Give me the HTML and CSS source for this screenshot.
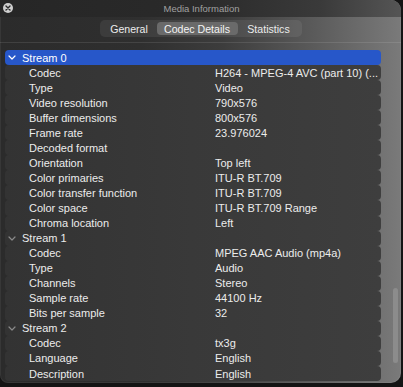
FILE: index.html
```html
<!DOCTYPE html>
<html>
<head>
<meta charset="utf-8">
<link rel="stylesheet" href="styles.css">
</head>
<body>
<div class="window">
  <div class="titlebar">
    <span class="close"><svg width="10" height="10" viewBox="0 0 10 10"><path d="M3 3 L7 7 M7 3 L3 7" stroke="#2a2a2a" stroke-width="1.4" stroke-linecap="round"/></svg></span>
    <span class="title">Media Information</span>
  </div>
  <div class="toolbar">
    <div class="segmented">
      <span class="seg seg-general">General</span>
      <span class="seg seg-codec active">Codec Details</span>
      <span class="seg seg-stats">Statistics</span>
    </div>
  </div>
  <div class="list">
    <div class="row stream selected"><span class="chev"><svg width="8" height="5" viewBox="0 0 8 5"><path d="M1 1 L4 4 L7 1" fill="none" stroke="#ffffff" stroke-width="1.2" stroke-linecap="round" stroke-linejoin="round"/></svg></span><span class="key">Stream 0</span></div>
    <div class="row"><span class="key">Codec</span><span class="val">H264 - MPEG-4 AVC (part 10) (...</span></div>
    <div class="row"><span class="key">Type</span><span class="val">Video</span></div>
    <div class="row"><span class="key">Video resolution</span><span class="val">790x576</span></div>
    <div class="row"><span class="key">Buffer dimensions</span><span class="val">800x576</span></div>
    <div class="row"><span class="key">Frame rate</span><span class="val">23.976024</span></div>
    <div class="row"><span class="key">Decoded format</span><span class="val"></span></div>
    <div class="row"><span class="key">Orientation</span><span class="val">Top left</span></div>
    <div class="row"><span class="key">Color primaries</span><span class="val">ITU-R BT.709</span></div>
    <div class="row"><span class="key">Color transfer function</span><span class="val">ITU-R BT.709</span></div>
    <div class="row"><span class="key">Color space</span><span class="val">ITU-R BT.709 Range</span></div>
    <div class="row"><span class="key">Chroma location</span><span class="val">Left</span></div>
    <div class="row stream"><span class="chev"><svg width="8" height="5" viewBox="0 0 8 5"><path d="M1 1 L4 4 L7 1" fill="none" stroke="#8a8a8a" stroke-width="1.2" stroke-linecap="round" stroke-linejoin="round"/></svg></span><span class="key">Stream 1</span></div>
    <div class="row"><span class="key">Codec</span><span class="val">MPEG AAC Audio (mp4a)</span></div>
    <div class="row"><span class="key">Type</span><span class="val">Audio</span></div>
    <div class="row"><span class="key">Channels</span><span class="val">Stereo</span></div>
    <div class="row"><span class="key">Sample rate</span><span class="val">44100 Hz</span></div>
    <div class="row"><span class="key">Bits per sample</span><span class="val">32</span></div>
    <div class="row stream"><span class="chev"><svg width="8" height="5" viewBox="0 0 8 5"><path d="M1 1 L4 4 L7 1" fill="none" stroke="#8a8a8a" stroke-width="1.2" stroke-linecap="round" stroke-linejoin="round"/></svg></span><span class="key">Stream 2</span></div>
    <div class="row"><span class="key">Codec</span><span class="val">tx3g</span></div>
    <div class="row"><span class="key">Language</span><span class="val">English</span></div>
    <div class="row"><span class="key">Description</span><span class="val">English</span></div>
    <div class="scroll-thumb"></div>
  </div>
</div>
</body>
</html>
```

FILE: styles.css
```css
html, body {
  margin: 0;
  padding: 0;
}
body {
  background: #141414;
  width: 403px;
  height: 387px;
  overflow: hidden;
  font-family: "Liberation Sans", Arial, sans-serif;
  font-size: 11px;
  color: #ececec;
}
.window {
  width: 401px;
  height: 383px;
  border-radius: 0 10px 10px 8px;
  overflow: hidden;
  background: linear-gradient(90deg, #2b2b2b 0%, #2f2f2f 35%, #3c3c3c 55%, #5a5a5a 78%, #7a7a7a 100%);
  display: flex;
  flex-direction: column;
  box-shadow: inset 0 0 0 1px rgba(255,255,255,0.06);
}
.titlebar {
  height: 17px;
  flex: none;
  display: flex;
  align-items: center;
  justify-content: center;
  position: relative;
  background: linear-gradient(90deg, #262626 0%, #2a2a2a 50%, #3a3a3a 80%, #555555 100%);
}
.close {
  position: absolute;
  left: 3px;
  top: 3px;
  width: 10px;
  height: 10px;
  border-radius: 50%;
  background: #cfcfcf;
  display: flex;
}
.title {
  font-size: 9.5px;
  color: #a0a0a0;
  margin-left: 2px;
}
.toolbar {
  flex: none;
  display: flex;
  justify-content: center;
  align-items: flex-start;
  padding-top: 3px;
  border-bottom: 1px solid rgba(255,255,255,0.10);
  box-sizing: border-box;
  height: 26px;
}
.segmented {
  display: flex;
  height: 17px;
  box-sizing: border-box;
  padding: 2px;
  border-radius: 5px;
  background: rgba(255,255,255,0.07);
}
.seg {
  display: flex;
  align-items: center;
  justify-content: center;
  font-size: 10.6px;
  color: #ececec;
  border-radius: 4px;
}
.seg-general { width: 55px; }
.seg-codec { width: 81px; }
.seg-stats { width: 62px; }
.seg.active {
  background: #6a6a6a;
  color: #f4f4f4;
}
.list {
  flex: 1;
  position: relative;
  padding: 7px 20px 0 5px;
}
.row {
  height: 15.05px;
  display: flex;
  align-items: center;
  border-radius: 4px;
  background: linear-gradient(90deg, #333333 0%, #393939 50%, #3e3e3e 100%);
  white-space: nowrap;
}
.row .key {
  width: 186px;
  padding-left: 24px;
  flex: none;
}
.row .val {
  flex: 1;
}
.row.stream .key {
  padding-left: 3px;
}
.chev {
  width: 11px;
  padding-left: 3px;
  display: flex;
  align-items: center;
  flex: none;
}
.row.selected {
  background: #2757c9;
  color: #ffffff;
}
.scroll-thumb {
  position: absolute;
  right: 3px;
  top: 245px;
  width: 5px;
  height: 75px;
  border-radius: 3px;
  background: #8c8c8c;
}
```
